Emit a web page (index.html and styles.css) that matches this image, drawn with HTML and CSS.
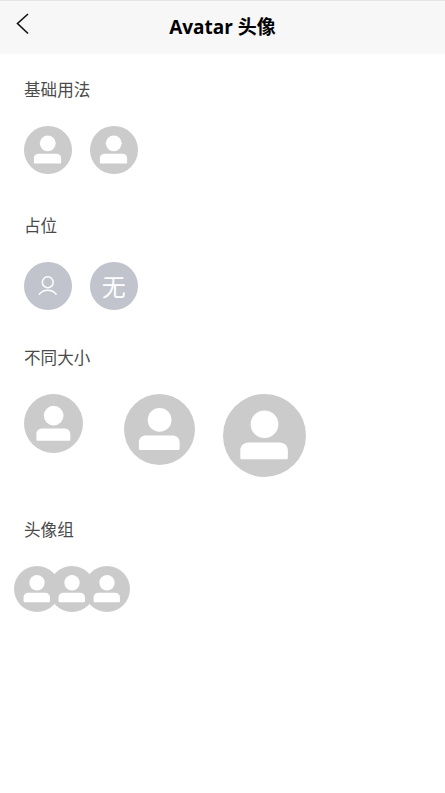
FILE: index.html
```html
<!DOCTYPE html>
<html lang="zh-CN">
<head>
<meta charset="UTF-8">
<meta name="viewport" content="width=device-width, initial-scale=1.0">
<title>Avatar 头像</title>
<link rel="stylesheet" href="styles.css">
</head>
<body>
<svg class="defs" aria-hidden="true">
    <symbol id="person" viewBox="0 0 48 48">
        <circle cx="24" cy="17.500" r="8" fill="#fff"/>
        <path d="M10.500 37.800a1 1 0 0 1-.500-1v-4.300c0-2.800 2.200-4.500 5-4.500h17.500c2.800 0 5 1.700 5 4.500v4.300a1 1 0 0 1-.500 1z" fill="#fff"/>
    </symbol>
    <symbol id="person-line" viewBox="0 0 48 48">
        <circle cx="24" cy="20.500" r="5.500" fill="none" stroke="#fff" stroke-width="1.500"/>
        <path d="M15.500 32.500c2-2.500 5-4 8.500-4s6.500 1.500 8.500 4" fill="none" stroke="#fff" stroke-width="1.500" stroke-linecap="round"/>
    </symbol>
</svg>

<header class="navbar">
    <button type="button" class="back" aria-label="返回">
        <svg width="13" height="22" viewBox="0 0 13 22"><path d="M12 1 1.500 10.500 12 20.500" fill="none" stroke="#111" stroke-width="1.600"/></svg>
    </button>
    <h1>Avatar 头像</h1>
</header>

<section class="demo">
    <h2>基础用法</h2>
    <div class="row">
        <span class="avatar"><svg><use href="#person"/></svg></span>
        <span class="avatar"><svg><use href="#person"/></svg></span>
    </div>
</section>

<section class="demo demo-tight">
    <h2>占位</h2>
    <div class="row">
        <span class="avatar avatar-blank"><svg><use href="#person-line"/></svg></span>
        <span class="avatar avatar-blank">无</span>
    </div>
</section>

<section class="demo">
    <h2>不同大小</h2>
    <div class="row row-sizes">
        <span class="avatar avatar-sm"><svg><use href="#person"/></svg></span>
        <span class="avatar avatar-md"><svg><use href="#person"/></svg></span>
        <span class="avatar avatar-lg"><svg><use href="#person"/></svg></span>
    </div>
</section>

<section class="demo">
    <h2>头像组</h2>
    <div class="row group">
        <span class="avatar"><svg><use href="#person"/></svg></span>
        <span class="avatar"><svg><use href="#person"/></svg></span>
        <span class="avatar"><svg><use href="#person"/></svg></span>
    </div>
</section>
</body>
</html>
```

FILE: styles.css
```css
body {
    margin: 0;
    background: #fff;
    font-family: "Open Sans", "Noto Sans CJK SC", sans-serif;
}
.defs { display: none; }

.navbar {
    box-sizing: border-box;
    height: 54px;
    display: grid;
    grid-template-columns: 1fr auto 1fr;
    align-items: center;
    padding: 0 16px 2px;
    background: #f7f7f8;
    border-top: 1px solid #e4e4e4;
}
.navbar h1 {
    grid-column: 2;
    grid-row: 1;
    margin: 0;
    font-size: 19px;
    line-height: 24px;
    font-weight: 700;
    color: #000;
}
.back {
    grid-column: 1;
    grid-row: 1;
    justify-self: start;
    display: flex;
    margin: 0 0 5px;
    padding: 0;
    border: none;
    background: none;
}

.demo { padding: 24px 24px 16px; }
.demo-tight { padding-bottom: 12px; }
.demo h2 {
    margin: 0 0 24px;
    font-size: 16.600px;
    line-height: 24px;
    font-weight: 400;
    color: #4a4a4a;
}

.row { display: flex; align-items: flex-start; min-height: 48px; }
.row-sizes { min-height: 84px; }

.avatar {
    flex: none;
    width: 47.500px;
    height: 47.500px;
    margin-right: 18.500px;
    display: flex;
    align-items: center;
    justify-content: center;
    border-radius: 50%;
    background: #cbcbcb;
    color: #fff;
    font-size: 24px;
}
.avatar svg { width: 100%; height: 100%; }
.avatar-blank { background: #c1c4cd; }
.avatar-sm { width: 59.300px; height: 59.300px; margin-right: 40.500px; }
.avatar-md { width: 71.200px; height: 71.200px; margin-right: 28px; }
.avatar-lg { width: 83px; height: 83px; margin-right: 0; }

.group { margin-left: -10px; }
.group .avatar { width: 46px; height: 46px; margin-right: -11px; }
```
